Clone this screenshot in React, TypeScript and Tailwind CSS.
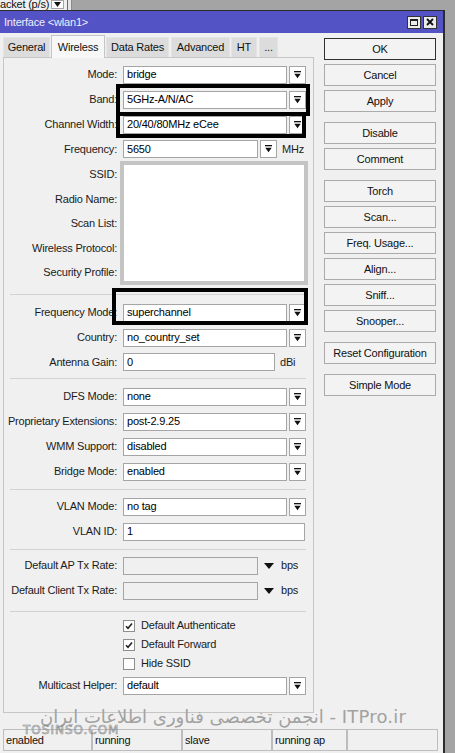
import React from "react";

function DropIcon() {
  return (
    <svg width="7" height="8" viewBox="0 0 7 8">
      <rect x="0" y="0" width="7" height="1.3" fill="#111" />
      <path d="M0.3 2.8H6.7L3.5 7.2Z" fill="#111" />
    </svg>
  );
}

function DropBtn() {
  return (
    <div className="w-[17px] h-[18px] ml-[2px] bg-white border border-[#a5a5a5] flex items-center justify-center">
      <DropIcon />
    </div>
  );
}

function Field({ value, className }: { value: string; className: string }) {
  return (
    <div className={"h-[18px] bg-white border border-[#a5a5a5] pl-[3px] flex items-center text-black " + className}>
      {value}
    </div>
  );
}

function Row({ label, children, h = "h-[25px]" }: { label: string; children?: React.ReactNode; h?: string }) {
  return (
    <div className={"flex items-center " + h}>
      <div className="w-[113px] text-right text-[#1b1b1b] whitespace-nowrap">{label}</div>
      <div className="ml-[6px] flex items-center">{children}</div>
    </div>
  );
}

function SelectRow({ label, value }: { label: string; value: string }) {
  return (
    <Row label={label}>
      <Field value={value} className="w-[164px]" />
      <DropBtn />
    </Row>
  );
}

function Sep({ mt }: { mt: string }) {
  return <div className={"ml-[6px] w-[296px] border-t border-[#d2d2d2] " + mt} />;
}

function Check({ label, checked }: { label: string; checked: boolean }) {
  return (
    <div className="flex items-center h-[19px] pl-[119px]">
      <div className="w-[12px] h-[12px] bg-white border border-[#8e8e8e] flex items-center justify-center">
        {checked && (
          <svg width="8" height="8" viewBox="0 0 8 8">
            <path d="M1 4.2L3 6.3L7 1.5" stroke="#222" strokeWidth="1.6" fill="none" />
          </svg>
        )}
      </div>
      <span className="ml-[6px] text-[#1b1b1b]">{label}</span>
    </div>
  );
}

function Btn({ label, def, mt = "mt-[4px]" }: { label: string; def?: boolean; mt?: string }) {
  return (
    <div
      className={
        "w-[112px] h-[22px] flex items-center justify-center bg-[#f3f3f3] border text-[#111] " +
        (def ? "border-[#2f2f2f] " : "border-[#ababab] ") +
        mt
      }
    >
      {label}
    </div>
  );
}

const tabs = [
  { name: "General", w: "w-[47px]", ml: "ml-0" },
  { name: "Wireless", w: "w-[54px]", ml: "ml-[1px]", active: true },
  { name: "Data Rates", w: "w-[63px]", ml: "ml-[1px]" },
  { name: "Advanced", w: "w-[59px]", ml: "ml-[2px]" },
  { name: "HT", w: "w-[26px]", ml: "ml-[1px]" },
  { name: "...", w: "w-[19px]", ml: "ml-[2px]" },
];

const status = [
  { t: "enabled", w: "w-[89px]" },
  { t: "running", w: "w-[90px]" },
  { t: "slave", w: "w-[90px]" },
  { t: "running ap", w: "w-[75px]" },
  { t: "", w: "w-[91px]" },
];

export default function App() {
  return (
    <div className="relative w-[455px] h-[753px] overflow-hidden bg-[#a4a4a4] font-['Liberation_Sans',Arial,sans-serif] text-[11px] tracking-[-0.2px]">
      {/* strip of the window behind */}
      <div className="flex h-[10px]">
        <div className="w-[67px] h-[10px] bg-[#f0f0f0] flex overflow-hidden">
          <span className="leading-[11px] -mt-[1px] text-[#111] whitespace-nowrap">acket (p/s)</span>
          <div className="ml-[2px] w-[13px] h-[9px] bg-white border border-[#a5a5a5] flex items-center justify-center">
            <svg width="7" height="5" viewBox="0 0 7 5">
              <path d="M0 0H7L3.5 5Z" fill="#111" />
            </svg>
          </div>
        </div>
        <div className="w-[1px] bg-[#6a6a6a]" />
        <div className="w-[3px] bg-[#e6e6e6]" />
        <div className="w-[1px] bg-[#8a8a8a]" />
      </div>

      {/* window */}
      <div className="w-[445px] h-[743px] border-t border-r-2 border-[#2c2c2c] flex flex-col">
        <div className="h-[22px] bg-[#5353c6] flex items-center justify-between pl-[4px] pr-[6px]">
          <span className="text-[#eeeef8]">Interface &lt;wlan1&gt;</span>
          <div className="flex gap-[2px]">
            <div className="w-[14px] h-[13px] bg-[#ececec] border border-[#333] flex items-center justify-center">
              <div className="w-[8px] h-[7px] border border-[#222] border-t-2" />
            </div>
            <div className="w-[14px] h-[13px] bg-[#ececec] border border-[#333] flex items-center justify-center">
              <svg width="8" height="8" viewBox="0 0 8 8">
                <path d="M1 1L7 7M7 1L1 7" stroke="#111" strokeWidth="1.8" />
              </svg>
            </div>
          </div>
        </div>

        <div className="flex-1 bg-[#f0f0f0] flex flex-col">
          <div className="flex pl-[3px]">
            {/* left column */}
            <div className="w-[311px] pt-[2px]">
              <div className="flex items-end h-[22px]">
                {tabs.map((t) =>
                  t.active ? (
                    <div
                      key={t.name}
                      className={
                        "relative z-10 h-[23px] -mb-px bg-[#f7f7f7] border border-b-0 border-[#c6c6c6] flex items-start justify-center pt-[3px] text-[#111] " +
                        t.w +
                        " " +
                        t.ml
                      }
                    >
                      {t.name}
                    </div>
                  ) : (
                    <div
                      key={t.name}
                      className={
                        "h-[20px] bg-[#dcdcdc] border border-b-0 border-[#e4e4e4] flex items-center justify-center text-[#111] " +
                        t.w +
                        " " +
                        t.ml
                      }
                    >
                      {t.name}
                    </div>
                  )
                )}
              </div>

              <div className="h-[656px] border border-[#c6c6c6] bg-[#f0f0f0] pt-[4px]">
                <SelectRow label="Mode:" value="bridge" />
                <SelectRow label="Band:" value="5GHz-A/N/AC" />
                <SelectRow label="Channel Width:" value="20/40/80MHz eCee" />
                <Row label="Frequency:" h="h-[24px]">
                  <Field value="5650" className="w-[135px]" />
                  <DropBtn />
                  <span className="ml-[5px] text-[#1b1b1b]">MHz</span>
                </Row>

                <div className="flex h-[124px]">
                  <div className="w-[113px] pt-[1px] flex flex-col text-right text-[#1b1b1b]">
                    {["SSID:", "Radio Name:", "Scan List:", "Wireless Protocol:", "Security Profile:"].map((l) => (
                      <div key={l} className="h-[25px] flex items-center justify-end whitespace-nowrap">
                        {l}
                      </div>
                    ))}
                  </div>
                  <div className="ml-[3px] w-[188px] h-[124px] bg-white border-4 border-[#c4c4c4]" />
                </div>

                <Sep mt="mt-[9px]" />
                <div className="mt-[5px]">
                  <SelectRow label="Frequency Mode:" value="superchannel" />
                  <SelectRow label="Country:" value="no_country_set" />
                  <Row label="Antenna Gain:" h="h-[24px]">
                    <Field value="0" className="w-[152px]" />
                    <span className="ml-[5px] text-[#1b1b1b]">dBi</span>
                  </Row>
                </div>

                <Sep mt="mt-[4px]" />
                <div className="mt-[5px]">
                  <SelectRow label="DFS Mode:" value="none" />
                  <SelectRow label="Proprietary Extensions:" value="post-2.9.25" />
                  <SelectRow label="WMM Support:" value="disabled" />
                  <SelectRow label="Bridge Mode:" value="enabled" />
                </div>

                <Sep mt="mt-[5px]" />
                <div className="mt-[4px]">
                  <SelectRow label="VLAN Mode:" value="no tag" />
                  <Row label="VLAN ID:">
                    <Field value="1" className="w-[182px]" />
                  </Row>
                </div>

                <Sep mt="mt-[5px]" />
                <div className="mt-[3px]">
                  {["Default AP Tx Rate:", "Default Client Tx Rate:"].map((l) => (
                    <Row key={l} label={l}>
                      <div className="w-[135px] h-[18px] bg-[#f0f0f0] border border-[#a5a5a5]" />
                      <svg className="ml-[6px]" width="10" height="6" viewBox="0 0 10 6">
                        <path d="M0 0H10L5 6Z" fill="#111" />
                      </svg>
                      <span className="ml-[7px] text-[#1b1b1b]">bps</span>
                    </Row>
                  ))}
                </div>

                <Sep mt="mt-[8px]" />
                <div className="mt-[4px]">
                  <Check label="Default Authenticate" checked />
                  <Check label="Default Forward" checked />
                  <Check label="Hide SSID" checked={false} />
                </div>
                <SelectRow label="Multicast Helper:" value="default" />
              </div>
            </div>

            {/* right column */}
            <div className="ml-[10px] pt-[5px] flex flex-col">
              <Btn label="OK" def mt="mt-0" />
              <Btn label="Cancel" />
              <Btn label="Apply" />
              <Btn label="Disable" mt="mt-[10px]" />
              <Btn label="Comment" />
              <Btn label="Torch" mt="mt-[10px]" />
              <Btn label="Scan..." />
              <Btn label="Freq. Usage..." />
              <Btn label="Align..." />
              <Btn label="Sniff..." />
              <Btn label="Snooper..." />
              <Btn label="Reset Configuration" mt="mt-[10px]" />
              <Btn label="Simple Mode" mt="mt-[10px]" />
            </div>
          </div>

          {/* status bar */}
          <div className="mt-[16px] ml-[3px] flex h-[22px]">
            {status.map((s, i) => (
              <div
                key={i}
                className={"h-[22px] border border-[#bdbdbd] pl-[2px] flex items-center text-[#111] " + s.w}
              >
                {s.t}
              </div>
            ))}
          </div>
        </div>
      </div>

      {/* highlight boxes */}
      <div className="absolute left-[116px] top-[84px] w-[194px] h-[32px] border-4 border-black" />
      <div className="absolute left-[116px] top-[112px] w-[190px] h-[26px] border-4 border-black" />
      <div className="absolute left-[112px] top-[288px] w-[196px] h-[37px] border-4 border-black" />

      {/* watermark */}
      <div className="absolute left-[40px] top-[704px] text-[18px] leading-[26px] tracking-[0.2px] text-[#a2a2a2] whitespace-nowrap font-['DejaVu_Sans',sans-serif]">
        انجمن تخصصی فناوری اطلاعات ایران - ITPro.ir
      </div>
      <div className="absolute left-[23px] top-[724px] text-[12px] leading-[12px] tracking-[1px] text-transparent [-webkit-text-stroke:0.6px_#8a8a8a] whitespace-nowrap font-['DejaVu_Sans',sans-serif]">
        TOSINSO.COM
      </div>
    </div>
  );
}
